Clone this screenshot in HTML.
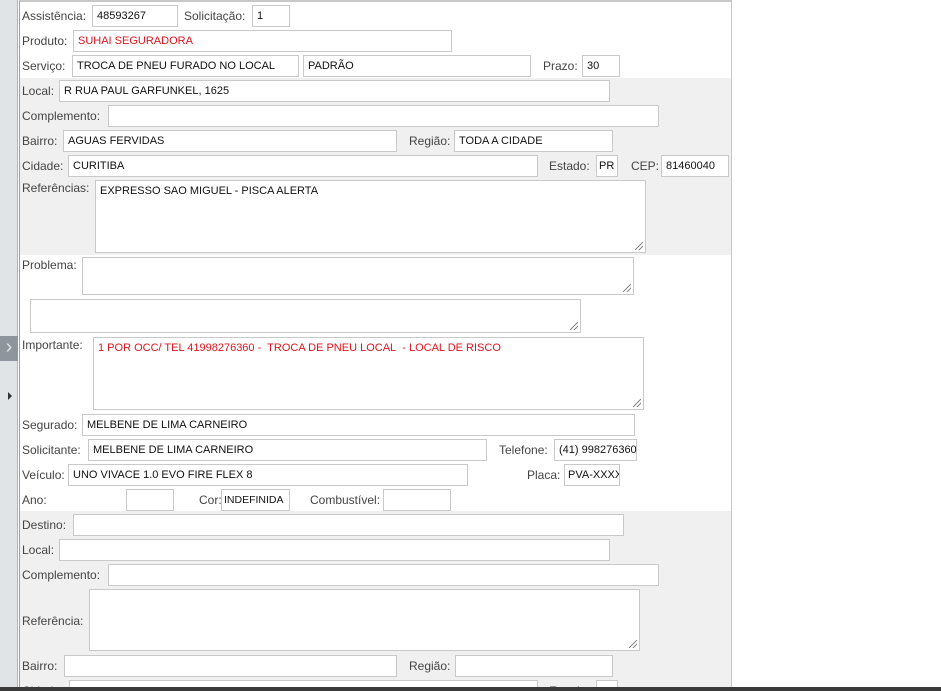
<!DOCTYPE html>
<html style="overflow:hidden;width:941px;height:691px"><head><meta charset="utf-8"><style>
*{box-sizing:border-box;margin:0;padding:0}
body{width:941px;height:691px;overflow:hidden;background:#fff;font-family:"Liberation Sans",Tahoma,sans-serif;font-size:12px;color:#444;position:relative}
.sb{position:absolute;left:0;top:0;width:18px;height:691px;background:#e1e4e7;border-right:1px solid #b0b4b8}
.pl{position:absolute;left:19px;top:0;width:713px;height:687px;border-left:1px solid #a0a0a0;border-right:1px solid #c8c8c8;border-top:2px solid #c8c8c8;background:#fff}
.g{position:absolute;left:20px;width:711px;background:#f0f0f0}
.l{position:absolute;white-space:nowrap;line-height:14px}
.i{position:absolute;background:#fff;border:1px solid #c9c9c9;height:22px;line-height:20px;padding-left:4px;color:#111;white-space:nowrap;overflow:hidden;font-size:11px}
.t{position:absolute;background:#fff;border:1px solid #c9c9c9;padding:4px;color:#111;font-size:11px}
.t:after{content:"";position:absolute;right:2px;bottom:2px;width:8px;height:8px;background:linear-gradient(135deg,transparent 45%,#888 45%,#888 55%,transparent 55%,transparent 70%,#888 70%,#888 80%,transparent 80%)}
.bar{position:absolute;left:0;top:687px;width:941px;height:4px;background:#3a3a3a}
.clip{position:absolute;left:0;top:0;width:941px;height:687px;overflow:hidden}
</style></head><body>
<div class="clip">
<div class="sb"></div>
<div style="position:absolute;left:0;top:336px;width:18px;height:25px;background:#8e959c;color:#dfe3e6;font-size:20px;line-height:23px;text-align:center">&#x203A;</div>
<div style="position:absolute;left:8px;top:392px;width:0;height:0;border-left:4px solid #333;border-top:4px solid transparent;border-bottom:4px solid transparent"></div>
<div class="pl"></div>
<div class="g" style="top:78px;height:177px"></div>
<div class="g" style="top:511px;height:176px"></div>

<div class="l" style="left:22px;top:9px">Assistência:</div><div class="i" style="left:92px;top:5px;width:86px">48593267</div>
<div class="l" style="left:184px;top:9px">Solicitação:</div><div class="i" style="left:252px;top:5px;width:38px">1</div>
<div class="l" style="left:22px;top:34px">Produto:</div><div class="i" style="left:73px;top:30px;width:379px;color:#e0141e">SUHAI SEGURADORA</div>
<div class="l" style="left:22px;top:59px">Serviço:</div><div class="i" style="left:72px;top:55px;width:227px">TROCA DE PNEU FURADO NO LOCAL</div>
<div class="i" style="left:303px;top:55px;width:228px">PADRÃO</div>
<div class="l" style="left:543px;top:59px">Prazo:</div><div class="i" style="left:582px;top:55px;width:38px">30</div>

<div class="l" style="left:22px;top:84px">Local:</div><div class="i" style="left:59px;top:80px;width:551px">R RUA PAUL GARFUNKEL, 1625</div>
<div class="l" style="left:22px;top:109px">Complemento:</div><div class="i" style="left:108px;top:105px;width:551px"></div>
<div class="l" style="left:22px;top:134px">Bairro:</div><div class="i" style="left:63px;top:130px;width:334px">AGUAS FERVIDAS</div>
<div class="l" style="left:409px;top:134px">Região:</div><div class="i" style="left:454px;top:130px;width:159px">TODA A CIDADE</div>
<div class="l" style="left:22px;top:159px">Cidade:</div><div class="i" style="left:68px;top:155px;width:470px">CURITIBA</div>
<div class="l" style="left:549px;top:159px">Estado:</div><div class="i" style="left:596px;top:155px;width:22px;padding-left:2px">PR</div>
<div class="l" style="left:631px;top:159px">CEP:</div><div class="i" style="left:661px;top:155px;width:68px">81460040</div>
<div class="l" style="left:22px;top:181px">Referências:</div><div class="t" style="left:95px;top:180px;width:551px;height:73px">EXPRESSO SAO MIGUEL - PISCA ALERTA</div>

<div class="l" style="left:22px;top:258px">Problema:</div><div class="t" style="left:82px;top:257px;width:552px;height:38px"></div>
<div class="t" style="left:30px;top:299px;width:551px;height:34px"></div>
<div class="l" style="left:22px;top:338px">Importante:</div><div class="t" style="left:93px;top:337px;width:551px;height:73px;color:#e0141e">1 POR OCC/ TEL 41998276360 -&nbsp; TROCA DE PNEU LOCAL&nbsp; - LOCAL DE RISCO</div>
<div class="l" style="left:22px;top:418px">Segurado:</div><div class="i" style="left:82px;top:414px;width:553px">MELBENE DE LIMA CARNEIRO</div>
<div class="l" style="left:22px;top:443px">Solicitante:</div><div class="i" style="left:88px;top:439px;width:399px">MELBENE DE LIMA CARNEIRO</div>
<div class="l" style="left:499px;top:443px">Telefone:</div><div class="i" style="left:554px;top:439px;width:83px">(41) 998276360</div>
<div class="l" style="left:22px;top:468px">Veículo:</div><div class="i" style="left:68px;top:464px;width:400px">UNO VIVACE 1.0 EVO FIRE FLEX 8</div>
<div class="l" style="left:527px;top:468px">Placa:</div><div class="i" style="left:564px;top:464px;width:56px;padding-left:3px">PVA-XXXX</div>
<div class="l" style="left:22px;top:493px">Ano:</div><div class="i" style="left:126px;top:489px;width:48px"></div>
<div class="l" style="left:199px;top:493px">Cor:</div><div class="i" style="left:221px;top:489px;width:69px;padding-left:2px;font-size:10.5px">INDEFINIDA</div>
<div class="l" style="left:310px;top:493px">Combustível:</div><div class="i" style="left:383px;top:489px;width:68px"></div>

<div class="l" style="left:22px;top:518px">Destino:</div><div class="i" style="left:73px;top:514px;width:551px"></div>
<div class="l" style="left:22px;top:543px">Local:</div><div class="i" style="left:59px;top:539px;width:551px"></div>
<div class="l" style="left:22px;top:568px">Complemento:</div><div class="i" style="left:108px;top:564px;width:551px"></div>
<div class="l" style="left:22px;top:614px">Referência:</div><div class="t" style="left:89px;top:589px;width:551px;height:62px"></div>
<div class="l" style="left:22px;top:659px">Bairro:</div><div class="i" style="left:64px;top:655px;width:333px"></div>
<div class="l" style="left:409px;top:659px">Região:</div><div class="i" style="left:455px;top:655px;width:158px"></div>
<div class="l" style="left:22px;top:684px">Cidade:</div><div class="i" style="left:69px;top:680px;width:469px"></div>
<div class="l" style="left:549px;top:684px">Estado:</div><div class="i" style="left:596px;top:680px;width:22px"></div>
</div>
<div class="bar"></div>
</body></html>
